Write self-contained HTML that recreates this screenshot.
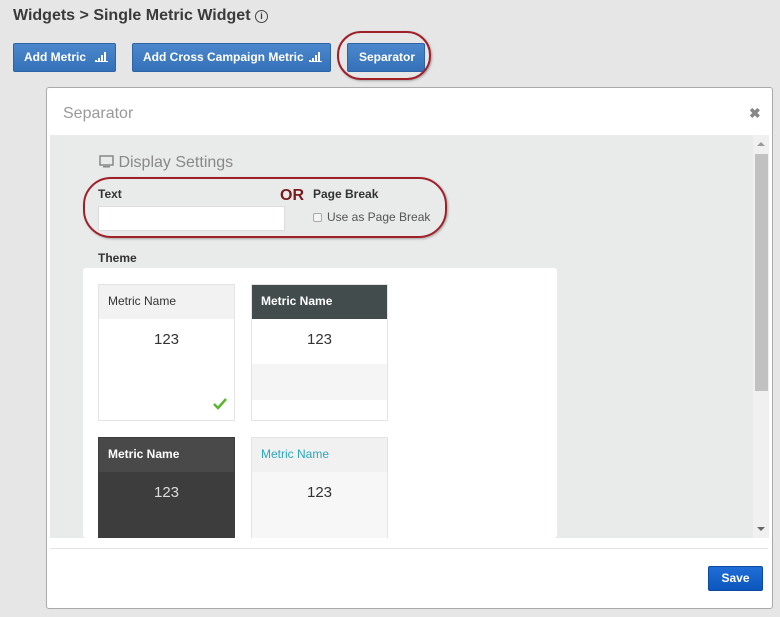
<!DOCTYPE html>
<html><head><style>
*{box-sizing:border-box;margin:0;padding:0}
body{width:780px;height:617px;background:#e6e6e6;font-family:"Liberation Sans",sans-serif;position:relative;overflow:hidden;color:#333}
.abs{position:absolute}
.btn{position:absolute;top:43px;height:29px;background:linear-gradient(#4a87cc,#3571b8);border:1px solid #2d64a6;border-radius:2px;color:#fff;font-weight:bold;font-size:12px;line-height:27px;padding-left:10px}
.bars{display:inline-block;vertical-align:-1px;margin-left:6px}
.card{position:absolute;width:137px;border:1px solid #e4e4e4;background:#fff;overflow:hidden}
.card .h{height:34px;line-height:32px;padding-left:9px;font-size:12px}
.card .v{text-align:center;font-size:15px;padding-top:12px}
</style></head><body>
<div class="abs" style="left:13px;top:7px;font-size:16px;font-weight:bold;color:#3a3a3a">Widgets &gt; Single Metric Widget <span style="display:inline-block;width:13px;height:13px;border:1.5px solid #444;border-radius:50%;font-size:9px;line-height:10px;text-align:center;vertical-align:1px">i</span></div>
<div class="btn" style="left:13px;width:103px">Add Metric <svg class="bars" width="13" height="10"><rect x="0" y="8" width="2" height="2" fill="#fff"/><rect x="3" y="6" width="2" height="4" fill="#fff"/><rect x="6" y="3" width="2" height="7" fill="#fff"/><rect x="9" y="0" width="2" height="10" fill="#fff"/><rect x="0" y="9" width="13" height="1" fill="#fff"/></svg></div>
<div class="btn" style="left:132px;width:199px">Add Cross Campaign Metric <svg class="bars" width="13" height="10" style="margin-left:2px"><rect x="0" y="8" width="2" height="2" fill="#fff"/><rect x="3" y="6" width="2" height="4" fill="#fff"/><rect x="6" y="3" width="2" height="7" fill="#fff"/><rect x="9" y="0" width="2" height="10" fill="#fff"/><rect x="0" y="9" width="13" height="1" fill="#fff"/></svg></div>
<div class="btn" style="left:347px;width:78px;padding-left:11px">Separator</div>
<div class="abs" style="left:337px;top:31px;width:94px;height:49px;border:2px solid #a0202a;border-radius:24px;box-shadow:1px 1px 2px rgba(0,0,0,.3)"></div>

<div class="abs" style="left:46px;top:87px;width:727px;height:522px;background:#fff;border:1px solid #aaa;border-radius:3px">
 <div class="abs" style="left:16px;top:17px;font-size:16px;color:#999">Separator</div>
 <div class="abs" style="left:702px;top:17px;font-size:14px;color:#888;font-weight:bold">✖</div>
 <div class="abs" style="left:3px;top:47px;width:703px;height:403px;background:#e9eaea"></div>
 <div class="abs" style="left:706px;top:47px;width:16px;height:403px;background:#f0f0f0"></div>
 <div class="abs" style="left:708px;top:66px;width:13px;height:237px;background:#c1c1c1"></div>
 <div class="abs" style="left:710px;top:54px;width:0;height:0;border:4px solid transparent;border-bottom-color:#999;border-top:0"></div>
 <div class="abs" style="left:710px;top:439px;width:0;height:0;border:4px solid transparent;border-top-color:#666;border-bottom:0"></div>
 <div class="abs" style="left:3px;top:460px;width:718px;height:1px;background:#e4e4e4"></div>
 <div class="abs" style="left:661px;top:478px;width:55px;height:25px;background:linear-gradient(#1f6ed6,#0c56bd);border:1px solid #0a4aa3;border-radius:2px;color:#fff;font-weight:bold;font-size:12px;text-align:center;line-height:23px">Save</div>
</div>

<div class="abs" style="left:99px;top:154px;font-size:16px;color:#888"><svg width="15" height="13" style="vertical-align:-1px"><rect x="1" y="1" width="13" height="9" fill="none" stroke="#888" stroke-width="1.5"/><rect x="4" y="11" width="7" height="1.5" fill="#888"/></svg> Display Settings</div>
<div class="abs" style="left:98px;top:187px;font-size:12px;font-weight:bold;color:#333">Text</div>
<div class="abs" style="left:98px;top:206px;width:187px;height:25px;background:#fff;border:1px solid #ddd"></div>
<div class="abs" style="left:280px;top:187px;font-size:16px;font-weight:bold;color:#7a1a1a">OR</div>
<div class="abs" style="left:313px;top:187px;font-size:12px;font-weight:bold;color:#333">Page Break</div>
<div class="abs" style="left:313px;top:213px;width:9px;height:9px;border:1px solid #aaa;border-radius:2px;background:#f4f4f4"></div>
<div class="abs" style="left:327px;top:210px;font-size:12px;color:#555">Use as Page Break</div>
<div class="abs" style="left:83px;top:177px;width:364px;height:61px;border:2px solid #a0202a;border-radius:28px;box-shadow:1px 1px 2px rgba(0,0,0,.3)"></div>
<div class="abs" style="left:98px;top:251px;font-size:12px;font-weight:bold;color:#333">Theme</div>

<div class="abs" style="left:83px;top:268px;width:474px;height:270px;background:#fff;border-radius:3px;overflow:hidden">
 <div class="card" style="left:15px;top:16px;height:137px"><div class="h" style="background:#f2f2f2;color:#333">Metric Name</div><div class="v">123</div>
  <svg class="abs" style="left:113px;top:113px" width="15" height="12"><path d="M2 6 L6 10 L14 1" stroke="#5cb531" stroke-width="2.5" fill="none"/></svg></div>
 <div class="card" style="left:168px;top:16px;height:137px"><div class="h" style="background:#434c4c;color:#fff;font-weight:bold">Metric Name</div><div class="v" style="height:45px">123</div><div style="height:36px;background:#f5f5f5"></div></div>
 <div class="card" style="left:15px;top:169px;height:110px;background:#3d3d3d;border-color:#3d3d3d"><div class="h" style="background:#494949;color:#fff;font-weight:bold">Metric Name</div><div class="v" style="color:#ddd">123</div></div>
 <div class="card" style="left:168px;top:169px;height:110px;background:#f7f7f7"><div class="h" style="background:#f1f1f1;color:#2aa7be">Metric Name</div><div class="v">123</div></div>
</div>
</body></html>
